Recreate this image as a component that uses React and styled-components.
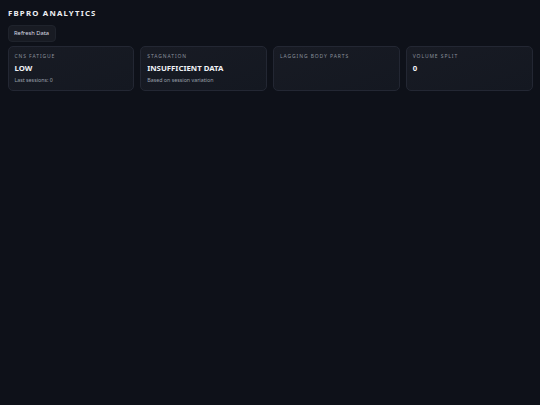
import React from "react";
import styled, { createGlobalStyle } from "styled-components";

const Global = createGlobalStyle`
  html, body { margin: 0; padding: 0; background: #0e1119; }
  body { font-family: "Noto Sans", "Open Sans", sans-serif; color: #e6e8ee; }
  * { box-sizing: border-box; }
`;

const Page = styled.div`
  min-height: 405px;
  padding: 7px 7.5px;
  background: #0e1119;
  display: flex;
  flex-direction: column;
  align-items: flex-start;
`;

const Title = styled.h1`
  margin: 0 0 0 0.5px;
  font-size: 7.8px;
  line-height: 12px;
  font-weight: 700;
  letter-spacing: 1.2px;
  color: #eef0f4;
`;

const Button = styled.button`
  margin-top: 6px;
  height: 17px;
  padding: 0 5.5px;
  border-radius: 4px;
  border: 1px solid #1f232c;
  background: #181b23;
  color: #d8dbe2;
  font-family: inherit;
  font-size: 5.8px;
  line-height: 1;
  cursor: pointer;
`;

const Grid = styled.div`
  margin-top: 4px;
  width: 100%;
  display: grid;
  grid-template-columns: repeat(4, 1fr);
  gap: 6px;
`;

const Card = styled.div`
  height: 45px;
  padding: 6px 6px;
  border-radius: 5px;
  border: 1px solid #232733;
  background: linear-gradient(160deg, #181b24 0%, #141821 100%);
  display: flex;
  flex-direction: column;
`;

const Label = styled.div`
  font-size: 5px;
  line-height: 7px;
  letter-spacing: 0.9px;
  color: #8a909c;
  text-transform: uppercase;
`;

const Value = styled.div`
  margin-top: 3px;
  font-size: 7.8px;
  line-height: 11px;
  font-weight: 700;
  color: #f0f2f6;
`;

const Sub = styled.div`
  margin-top: 2.5px;
  font-size: 5.3px;
  line-height: 7px;
  color: #9aa0ab;
`;

const cards = [
  { label: "CNS Fatigue", value: "LOW", sub: "Last sessions: 0" },
  { label: "Stagnation", value: "INSUFFICIENT DATA", sub: "Based on session variation" },
  { label: "Lagging Body Parts" },
  { label: "Volume Split", value: "0" },
];

export default function App() {
  return (
    <>
      <Global />
      <Page>
        <Title>FBPRO ANALYTICS</Title>
        <Button>Refresh Data</Button>
        <Grid>
          {cards.map((c) => (
            <Card key={c.label}>
              <Label>{c.label}</Label>
              {c.value && <Value>{c.value}</Value>}
              {c.sub && <Sub>{c.sub}</Sub>}
            </Card>
          ))}
        </Grid>
      </Page>
    </>
  );
}
